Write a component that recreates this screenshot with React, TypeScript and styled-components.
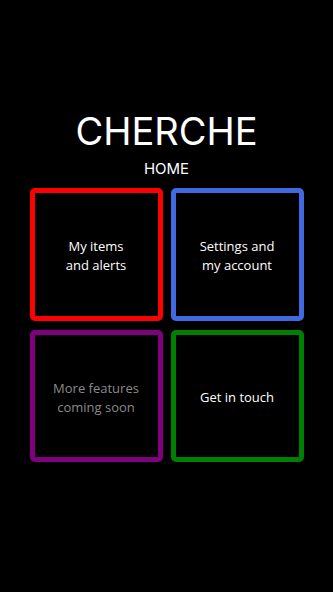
import styled, {createGlobalStyle} from "styled-components";

const GlobalStyle = createGlobalStyle`
  html, body {
    margin: 0;
    padding: 0;
    background: #000;
  }
  body {
    font-family: Inter, "Liberation Sans", sans-serif;
    color: #fff;
  }
`;

const Page = styled.div`
  min-height: 100vh;
  display: flex;
  flex-direction: column;
  align-items: center;
  padding-top: 112px;
  box-sizing: border-box;
`;

const Title = styled.h1`
  margin: 0;
  font-family: Inter, "Liberation Sans", sans-serif;
  font-weight: 400;
  font-size: 38px;
  line-height: 1;
`;

const Subtitle = styled.div`
  margin-top: 10px;
  font-size: 15px;
  line-height: 18px;
`;

const Grid = styled.div`
  margin-top: 10px;
  display: grid;
  grid-template-columns: 133px 133px;
  grid-template-rows: 133px 132px;
  column-gap: 8px;
  row-gap: 9px;
`;

const Tile = styled.div<{$color: string; $muted?: boolean}>`
  box-sizing: border-box;
  border: 5px solid ${p => p.$color};
  border-radius: 5px;
  padding-top: 3px;
  display: flex;
  align-items: center;
  justify-content: center;
  text-align: center;
  font-family: "Open Sans", Lato, sans-serif;
  font-size: 13px;
  line-height: 19px;
  color: ${p => (p.$muted ? "#8a8a8a" : "#fff")};
`;

const tiles = [
    {color: "#ff0000", text: ["My items", "and alerts"]},
    {color: "#4169e1", text: ["Settings and", "my account"]},
    {color: "#800080", text: ["More features", "coming soon"], muted: true},
    {color: "#008000", text: ["Get in touch"]},
];

function App() {
    return (
        <>
            <GlobalStyle/>
            <Page>
                <Title>CHERCHE</Title>
                <Subtitle>HOME</Subtitle>
                <Grid>
                    {tiles.map(t => (
                        <Tile key={t.text[0]} $color={t.color} $muted={t.muted}>
                            <span>
                                {t.text.map((line, i) => (
                                    <span key={line}>{i > 0 && <br/>}{line}</span>
                                ))}
                            </span>
                        </Tile>
                    ))}
                </Grid>
            </Page>
        </>
    );
}

export default App;
